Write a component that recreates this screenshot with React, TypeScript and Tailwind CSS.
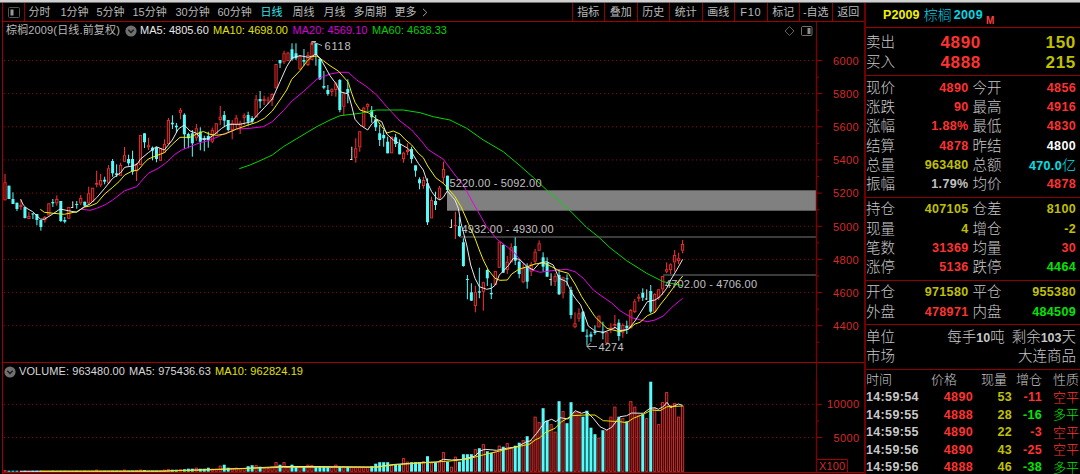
import React from "react";

type Kind = "r" | "c" | "w";
// kind, high, body top, body bottom, low
type Candle = [Kind, number, number, number, number];

const STEP = 3.986;
const FIRST_X = 5;
const BASELINE = 471.7;

const candles: Candle[] = [
  ["r", 174, 182.3, 200.3, 200.3], ["c", 185.7, 185.7, 199, 199], ["c", 192.3, 199, 204, 204], ["c", 202.7, 202.7, 209, 211],
  ["r", 199.3, 205, 207, 210], ["c", 207, 207, 218, 218.5], ["r", 212, 216, 219, 219], ["c", 213, 213.5, 214.5, 219],
  ["c", 214, 214, 220, 225.3], ["c", 220, 220, 227, 230.7], ["r", 216, 217, 220, 222.7], ["r", 203, 203.3, 215.3, 215.3],
  ["c", 199, 202, 203.3, 207], ["r", 195.3, 199, 203.3, 205.7], ["c", 201, 201, 221, 222], ["c", 217, 220, 221.7, 223.3],
  ["r", 207, 207, 218.7, 218.7], ["w", 201.3, 206.5, 207.5, 207.7], ["c", 201, 204, 205, 208.7], ["r", 195, 198, 203.3, 205],
  ["c", 201.7, 201.7, 205.7, 206], ["r", 186.7, 193.3, 203.3, 205], ["r", 187.7, 187.7, 201.7, 202], ["r", 170.7, 183, 184.7, 187.3],
  ["r", 174, 180, 185.3, 187], ["c", 176.7, 179.7, 181.7, 184.3], ["r", 165, 168.3, 183.3, 183.3], ["c", 159, 161, 173.3, 176.7],
  ["c", 164.3, 173.3, 175, 177], ["r", 162.7, 165, 175.7, 175.7], ["r", 147, 155.3, 161.7, 162], ["c", 154.7, 159, 163.3, 165.7],
  ["c", 150.7, 159, 171.7, 174.7], ["r", 163, 164.7, 171.3, 181], ["r", 135, 135, 165, 165], ["c", 133.3, 133.3, 142.3, 148],
  ["r", 137.7, 145.3, 147.3, 150], ["c", 146.5, 147.7, 150.7, 160.3], ["c", 147, 147.3, 159, 162.3], ["r", 148, 148.3, 160.7, 160.7],
  ["r", 139.3, 144, 152.7, 152.7], ["r", 118, 120, 144, 144], ["c", 115.3, 122.7, 124.3, 129], ["c", 123, 125.7, 127.3, 132.7],
  ["r", 108, 110, 112.7, 119.3], ["c", 113.3, 114.7, 134.3, 148.7], ["c", 132.7, 134, 138.3, 148.3], ["c", 130, 133.3, 143.3, 156.7],
  ["r", 124, 128.3, 138.3, 141], ["c", 127.3, 131.7, 141.7, 150.3], ["c", 135.7, 138.3, 140, 151.3], ["c", 131.7, 136, 140, 147.7],
  ["r", 127.7, 130, 141.7, 143.3], ["r", 123, 123.3, 134, 134], ["r", 106, 116.7, 120, 125], ["c", 111, 115, 120.7, 126.7],
  ["c", 120, 120, 130, 131.7], ["r", 120, 123.3, 130, 139.3], ["r", 115, 117.7, 125, 129], ["r", 120.7, 122.7, 126.7, 134],
  ["r", 113.3, 115.3, 118, 125.3], ["c", 111.7, 115, 121.7, 125.7], ["c", 116, 118, 121.7, 123.3], ["r", 95, 99.3, 117.3, 117.3],
  ["c", 91, 99, 101.3, 108.3], ["r", 95.7, 99, 101, 105], ["r", 96.7, 99.5, 100.5, 104], ["r", 93.3, 94, 100, 106],
  ["r", 64, 64, 88.3, 88.3], ["c", 60, 60, 63.3, 68], ["r", 50.7, 53.3, 62.3, 64], ["r", 51.7, 52.7, 61, 61],
  ["c", 43.3, 49.3, 59.3, 60.7], ["c", 43.3, 53.3, 58.3, 60], ["r", 55, 56, 69.3, 70], ["c", 49, 60, 61.7, 65.7],
  ["r", 51.7, 55, 65, 66], ["r", 41, 42.7, 60, 60], ["c", 43, 43.3, 55, 65.7], ["c", 58, 59, 79.3, 80],
  ["c", 71, 86, 87.7, 89.3], ["c", 85, 90, 94, 95.7], ["r", 88.3, 89.3, 92, 96], ["r", 81.7, 83.3, 90, 96.7],
  ["c", 79, 80, 110, 112.3], ["r", 93.3, 93.3, 106.7, 115.7], ["c", 79.3, 89, 93, 103.3], ["w", 146.7, 158.5, 159.5, 160],
  ["r", 138.3, 148.3, 157.7, 162.7], ["r", 131.3, 131.3, 147.3, 151.7], ["r", 106.7, 107.7, 126.7, 126.7], ["r", 103.3, 104, 106.7, 111.7],
  ["c", 106, 110, 117.3, 122.7], ["c", 115, 119.3, 127.3, 131], ["c", 125, 133.3, 140, 146], ["c", 130, 135, 138.3, 146.7],
  ["c", 136.7, 141.7, 153.3, 153.3], ["r", 136.7, 136.7, 153.3, 153.3], ["c", 134, 137.3, 144, 147], ["c", 139.3, 144, 154.3, 154.3],
  ["r", 151.7, 152.7, 159, 162.7], ["r", 143.3, 150, 152, 155], ["c", 146.7, 149, 159, 163.3], ["c", 165.3, 165.3, 170.7, 176.7],
  ["c", 177.3, 179.3, 183.3, 189.3], ["r", 176.7, 180, 186, 188.7], ["c", 178.3, 183.3, 222.3, 225], ["r", 196.7, 200, 218.3, 218.3],
  ["c", 191.7, 201, 205, 210], ["r", 186, 187.7, 198.3, 200], ["r", 161.7, 169, 177.7, 184], ["c", 175.7, 175.7, 190, 191],
  ["w", 219.3, 226.5, 227.5, 227.7], ["r", 211.7, 225, 226, 239], ["c", 216.7, 226, 236, 237], ["c", 238.3, 242.3, 266, 266.7],
  ["c", 275, 279, 280, 299.3], ["c", 283.3, 292.3, 300.7, 301], ["r", 285.7, 292.3, 306, 312.3], ["c", 267.7, 291.3, 292.7, 298.3],
  ["r", 281.7, 282.3, 291.7, 310.7], ["c", 269, 270, 278.3, 286], ["c", 283.3, 293, 294.3, 299], ["r", 271, 271, 285, 285],
  ["r", 241.7, 241.7, 267.7, 268], ["c", 244, 245, 272.7, 273], ["r", 256, 261.7, 270, 274], ["r", 243.3, 247.3, 262.3, 262.3],
  ["c", 237.3, 246, 260.7, 265], ["c", 260, 261.7, 274, 278.3], ["r", 263.3, 268.3, 282.3, 283.3], ["c", 263.3, 266, 281.7, 288.7],
  ["r", 261.7, 264.3, 271.7, 276], ["r", 249, 251.7, 261.7, 264.3], ["r", 240.3, 243.3, 250.7, 250.7], ["c", 252.3, 257.3, 266.7, 271.7],
  ["c", 257.3, 262.7, 276.7, 277], ["w", 273.3, 278.5, 279.5, 285.7], ["r", 273.3, 276, 281.7, 286], ["c", 269, 275, 294.3, 295],
  ["r", 276.7, 277.3, 293.3, 298.3], ["c", 274.3, 278.3, 279.3, 285.7], ["c", 286.7, 290, 315, 318.7], ["r", 312.3, 323.3, 327.3, 328.3],
  ["r", 308.3, 313.3, 318.7, 321.7], ["c", 311, 311.7, 331.7, 332], ["c", 329.3, 335.5, 336.7, 345.7], ["c", 331.7, 334.3, 336.7, 341.7],
  ["c", 325.3, 331.5, 333, 335], ["r", 315.7, 315.7, 327.3, 327.3], ["c", 321.7, 331.7, 333.3, 339.3], ["r", 331.7, 332.3, 343.3, 343.3],
  ["r", 323.3, 327.5, 329, 333.3], ["r", 315, 324, 325.7, 329.3], ["c", 319.3, 322.7, 336, 340.7], ["r", 323.3, 325, 332.7, 337.7],
  ["c", 320.7, 325.7, 328.3, 334], ["r", 309, 310, 328.3, 328.3], ["r", 299, 301.3, 312, 313], ["r", 294, 296.7, 298.7, 301.7],
  ["c", 288.3, 292.7, 297.7, 301], ["w", 289.3, 298, 299, 300], ["c", 285, 291, 311.7, 313.3], ["r", 293.3, 294, 311.7, 312.5],
  ["r", 289.3, 289.3, 297.7, 300], ["r", 276, 276, 289.3, 295], ["r", 262.3, 269.3, 271.7, 273.3], ["r", 263.3, 264.3, 270, 274],
  ["r", 250, 255, 262.3, 271.7], ["r", 252.7, 258.3, 261, 264], ["r", 240, 244, 250.7, 253.3],
];

// bar heights in pixels, one for each candle
const volumes: number[] = [
  1.5, 1, 1, 1, 1, 1, 1, 1, 1, 1, 1, 1, 1, 1, 1, 1, 1, 1, 1, 1,
  1, 1, 1, 2, 1, 1, 1, 1, 1, 1, 2, 1, 1, 1.5, 2, 1.5, 1, 1, 1, 1,
  2, 2.5, 2, 2, 2.5, 2.5, 3, 3, 4, 3, 3, 4, 3, 3, 6, 7, 4, 3.5, 4, 3.5,
  3.5, 5.5, 6.5, 6.5, 5, 4, 3.5, 5, 9.5, 7, 9.5, 5, 7, 5.5, 5, 5.5, 7, 6.5, 5, 5.5,
  5.5, 5, 5, 7, 5, 5.5, 5, 5, 5, 5, 5, 5, 5.5, 8, 9.5, 9.5, 9.5, 7, 7.5, 7,
  13.5, 10, 9.5, 9.5, 9.5, 10.5, 15.5, 9, 9, 10, 19.5, 10, 5, 15, 10, 17.5, 17.5, 17.5, 22.5, 23.5,
  27.5, 20.5, 19, 20, 26, 25, 28.5, 24.5, 26, 29, 31.5, 35.5, 31.5, 55, 49.5, 63.5, 51, 47.5, 40, 70.5,
  60.5, 48.5, 69.5, 59.5, 60, 55, 61, 44, 37.5, 34, 41.5, 41.5, 55, 65, 55, 53.5, 50.5, 70.5, 65, 57,
  57.5, 53.5, 90, 63.5, 47.5, 69.5, 79.5, 66.5, 68.5, 55, 66,
];

const priceLines = [
  {
    color: "#e800e8",
    points:
      "81.7,209.3 90,210.3 96.7,208.3 104.7,205 112.7,200 120,194.3 124.7,190.7 136.7,186.7 140.3,182.3 148.3,173.3 158.3,168.3 166.7,162.3 175,154.3 181.7,150 190,146.7 200,142.7 208.3,140.7 218.3,136.7 225,133.3 236.7,129 250,128.3 263.3,126.7 272.3,121.7 283.3,110.7 292.3,100.7 303.3,91.7 316.7,79.3 330,74 340,72.3 348.3,72.3 356.7,80 366.7,86.7 376.7,95 386.7,106.7 400,121 411.7,130 423.3,143.3 427.7,149.3 443.3,159.3 455,175 463.3,185 473.3,203.3 486.7,226.7 496.7,239 507.3,247 515,253.3 521.7,261.7 530,269.3 540,272.3 551.7,270.7 566.7,269.3 575,271.7 583.3,278.3 593.3,290 603,297 611.7,303 620,310.7 631.7,317.7 647.3,321.7 655,320 663.3,316 673.3,306 682.7,298.3",
  },
  {
    color: "#00d800",
    points:
      "239.3,168.7 250,165 260,160.7 272.3,155 283.3,146.7 300,136.7 316.7,126.7 330,120 340,115.7 360,113.3 376.7,110 403.3,110 420,112.7 433.3,116.7 450,120 466.7,128.3 483.3,140 503.3,151.7 520,165.7 533.3,177.5 546.7,190 570,210.7 586.7,227.5 598.3,236.7 610,247.7 626.7,260.7 646.7,273.3 663.3,281.7 682.7,285.7",
  },
  {
    color: "#f0f000",
    points:
      "40.3,209.3 44.3,212.3 53.3,213.3 64.3,214.3 76.7,211.7 84.7,207 90,206 96.7,203.3 104.7,194 112.7,187.3 119,181.7 124.7,175 132.3,171 138.3,170 143.3,164 148.3,159 156.3,155.7 164.3,152.7 172.3,144.3 180,137.3 190,137.3 196.7,134 203.3,131.5 210,134.3 216.7,135.3 225,134 236.7,129 248.3,125 256.7,122.3 264.3,118.3 272.3,111 280,100 286.7,90 291.7,79.3 300,70.7 306.7,61.7 311.7,56.7 316.7,56 323.3,60.7 330,65.7 338.3,71 348.3,82.3 351.7,93.3 355,102.3 360,110 368.3,112.7 376.7,119.3 381.7,126.7 387,133 393.3,131 400,134 405,139.3 411.7,145 418.3,153.3 423.3,157.7 427.7,166 435.7,177.7 443.3,183.3 447.3,187.7 455,196.7 461,206.7 468.3,223.3 475,238.3 479.3,250 483.3,260 488.3,270 495,278.3 500,280.3 507.3,280 511.7,274 519.3,269 527.3,266.7 535,264 543,262.7 551.7,266.7 559,270.7 568.3,273.3 575,284 581.7,296.7 588.3,306.7 595,316.7 601.7,323.3 607,328.3 610,329.3 620,331.7 628.3,329.3 635,324 640,322.3 647.3,315.7 655,312.3 660,305 666.7,296.7 673.3,287.7 682.7,276",
  },
  {
    color: "#e8e8e8",
    points:
      "20.7,199.3 23.3,205 26.7,208.3 32.7,211.7 40.3,219 44.3,219.3 52.3,214.3 60,209 68.3,210.7 76.7,212.3 83.3,207.3 90,204 96.7,197.7 104.7,188.3 112.7,178.3 120.7,172.7 124.7,167.3 132.3,166 137.3,164 140.3,159.3 148.3,152.7 156.3,146.7 164.3,150 172.3,140 178.3,129 184.3,125 190,131 196.7,133.3 201,139 208.3,138.8 215,134 221.7,128.3 228.3,124.3 240,124.3 251.7,121.7 256.7,115.7 264.3,107.7 272.3,99 280,81.7 286.7,66.7 292.3,57.7 300,55.7 308.3,57.3 312.3,56 316,54 320.7,59 325,66.7 330,75.7 335.7,83.3 340,91.7 348.3,94 351.7,106 355,119.3 360,125 367.7,130 371.7,124 376.7,119.3 381.7,121.7 386.7,134 393.3,140 400,143.8 407.7,148.3 411.7,152.3 418.3,163.3 423.3,170 427.7,183.3 431.7,191.7 436.7,198.3 440,200 443.3,197.3 447.3,191 455,200 458.3,208.3 461,223.3 466.7,245 470.7,265 475,278.3 479.3,286.7 486.7,289.3 491.3,288.3 495.3,285 499.3,275 503.3,271 508.3,265.7 513.3,258.3 519.3,259.3 527.3,266.7 533.3,270 539.3,263.3 546.7,261.7 553.3,265 559,278.3 566.7,281.7 571,291.7 575.3,298.3 580.7,305 585,316.7 588.3,326 595,331 603.3,332.3 611.7,329.3 615,327.3 620,330.7 628.3,329.3 635,321 640,313.3 647.3,301.7 655,300 660,296.7 666.7,288.3 670.7,280 676.7,270 682.7,259.3",
  },
];

const volumeLines = [
  {
    color: "#e8e8e8",
    points:
      "20,471.3 165,471 195,470 240,468.7 262,467.5 283,466.5 310,466.5 376,467 393,464.5 410,463.3 430,462.3 436.7,462.3 443.3,459.3 451.7,460 463.3,459.3 475,456 480,451 485,449.3 496.7,450.3 506.7,448.3 517.3,446.7 526.7,441.7 530,441 536.7,433.3 545,421.7 551.7,419.3 556,421.7 560,417.7 568.3,419 575,410.7 581.7,413.3 586.7,411.7 593.3,418.3 600,426.7 606.7,430 611.7,427.3 620,416.7 626.7,415.7 631.7,413 643.3,413.3 650,408.3 655,407.7 658.3,409.3 663.3,406.7 667,402.3 670.7,407.7 678.3,404 682.7,405.3",
  },
  {
    color: "#e6e600",
    points:
      "40,471.3 163.3,471.3 173.3,470.7 193.3,470.3 213.3,469.7 233.3,468.7 260,468 283.3,467.3 376.7,467.3 393.3,465 430,462.3 450,461 466.7,459.3 480,455.7 496.7,451.7 513.3,447.7 530,444 535,440 540,437.7 545,432.7 555,428.3 561.7,421.7 571.7,415.7 585,415 595,415 603.3,420.7 620,421.7 626.7,422.7 633.3,418.3 643.3,414.3 651.7,410 660,410.7 667,406.7 682.7,406",
  },
];

const priceTicks = [6000, 5800, 5600, 5400, 5200, 5000, 4800, 4600, 4400].map((value, i) => ({
  value,
  y: 60.5 + i * 33.15,
}));

const periods = [
  { label: "分时", width: "w-8" },
  { label: "1分钟", width: "w-9" },
  { label: "5分钟", width: "w-9" },
  { label: "15分钟", width: "w-[43px]" },
  { label: "30分钟", width: "w-[42px]" },
  { label: "60分钟", width: "w-[43px]" },
  { label: "日线", width: "w-8", active: true },
  { label: "周线", width: "w-[31px]" },
  { label: "月线", width: "w-[30px]" },
  { label: "多周期", width: "w-[41px]" },
  { label: "更多", width: "w-[26px]" },
];

const tools = ["指标", "叠加", "历史", "统计", "画线", "F10", "标记", "-自选", "返回"];

const RED = "text-[#ff3232]";
const YELLOW = "text-[#c0c000]";
const GREEN = "text-[#00e600]";
const CYAN = "text-[#00e0e8]";
const WHITE = "text-white";
const GRAY = "text-[#c0c0c0]";

type QuoteLine = [string, string, string, string, string, string];

const quotes: QuoteLine[] = [
  ["现价", "4890", RED, "今开", "4856", RED],
  ["涨跌", "90", RED, "最高", "4916", RED],
  ["涨幅", "1.88%", RED, "最低", "4830", RED],
  ["结算", "4878", RED, "昨结", "4800", WHITE],
  ["总量", "963480", YELLOW, "总额", "470.0亿", CYAN],
  ["振幅", "1.79%", GRAY, "均价", "4878", RED],
];

const positions: QuoteLine[] = [
  ["持仓", "407105", YELLOW, "仓差", "8100", YELLOW],
  ["现量", "4", YELLOW, "增仓", "-2", YELLOW],
  ["笔数", "31369", RED, "均量", "30", RED],
  ["涨停", "5136", RED, "跌停", "4464", GREEN],
];

const flows: QuoteLine[] = [
  ["开仓", "971580", YELLOW, "平仓", "955380", YELLOW],
  ["外盘", "478971", RED, "内盘", "484509", GREEN],
];

const trades = [
  { time: "14:59:54", price: "4890", volume: "53", change: "-11", nature: "空平", tone: RED },
  { time: "14:59:55", price: "4888", volume: "28", change: "-16", nature: "多平", tone: GREEN },
  { time: "14:59:55", price: "4890", volume: "22", change: "-3", nature: "空平", tone: RED },
  { time: "14:59:56", price: "4890", volume: "43", change: "-25", nature: "空平", tone: RED },
  { time: "14:59:56", price: "4888", volume: "46", change: "-38", nature: "多平", tone: GREEN },
];

const svgFont = "'Liberation Sans', 'Noto Sans CJK SC', sans-serif";

function CandleMark({ candle, index }: { candle: Candle; index: number }) {
  const [kind, high, top, bottom, low] = candle;
  const x = FIRST_X + index * STEP;
  if (kind === "w") {
    return <path d={`M${x} ${high}V${low}M${x - 1.8} ${bottom}H${x + 0.4}`} stroke="#e0e0e0" strokeWidth="1" fill="none" />;
  }
  if (kind === "c") {
    return (
      <g fill="#54fcfc">
        <rect x={x - 0.5} y={high} width="1" height={low - high} />
        <rect x={x - 1.5} y={top} width="3" height={bottom - top} />
      </g>
    );
  }
  return (
    <g fill="#ff3232">
      <rect x={x - 0.5} y={high} width="1" height={Math.max(top - high, 0)} />
      <rect x={x - 0.5} y={bottom} width="1" height={Math.max(low - bottom, 0)} />
      <rect
        x={x - 1.1}
        y={top + 0.4}
        width="2.2"
        height={Math.max(bottom - top - 0.8, 0.3)}
        fill="#300404"
        stroke="#f03030"
        strokeWidth="0.9"
      />
    </g>
  );
}

function VolumeBar({ height, index }: { height: number; index: number }) {
  const x = FIRST_X + index * STEP;
  if (candles[index][0] === "c") {
    return <rect x={x - 1.5} y={BASELINE - height} width="3" height={height} fill="#54fcfc" />;
  }
  return (
    <rect
      x={x - 1.1}
      y={BASELINE - height + 0.4}
      width="2.2"
      height={Math.max(height - 0.8, 0.3)}
      fill="#380606"
      stroke="#e03030"
      strokeWidth="0.9"
    />
  );
}

function GridLine({ y }: { y: number }) {
  return (
    <>
      <line x1="4" x2="815" y1={y} y2={y} stroke="#a00000" strokeWidth="1" strokeDasharray="1 3" />
      <line x1="817" x2="822" y1={y} y2={y} stroke="#a00000" strokeWidth="1" />
    </>
  );
}

function PriceChart() {
  return (
    <svg className="block shrink-0" width="864" height="323" viewBox="0 39 864 323" fontFamily={svgFont}>
      {priceTicks.map((tick) => (
        <g key={tick.value}>
          <GridLine y={tick.y} />
          <line x1="817" x2="819" y1={tick.y + 16.6} y2={tick.y + 16.6} stroke="#a00000" />
          <text x="833" y={tick.y + 4.3} fontSize="11" fill="#d42a2a" textLength="25.5">
            {tick.value}
          </text>
        </g>
      ))}
      <rect x="447" y="190.3" width="369" height="20.4" fill="#808080" />
      <line x1="460" x2="816" y1="237" y2="237" stroke="#505050" strokeWidth="1.6" />
      <line x1="663" x2="816" y1="275" y2="275" stroke="#505050" strokeWidth="1.6" />
      {candles.map((candle, i) => (
        <CandleMark key={i} candle={candle} index={i} />
      ))}
      {priceLines.map((line) => (
        <polyline key={line.color} points={line.points} fill="none" stroke={line.color} strokeWidth="1" />
      ))}
      <g fill="#c0c0c0" fontSize="11">
        <text x="449.5" y="186.8" textLength="92">5220.00 - 5092.00</text>
        <text x="461.5" y="233" textLength="92">4932.00 - 4930.00</text>
        <text x="665" y="288.3" textLength="92">4702.00 - 4706.00</text>
        <text x="324.5" y="50" textLength="26">6118</text>
        <text x="598.5" y="351" textLength="25">4274</text>
      </g>
      <g fill="none" stroke="#b0b0b0" strokeWidth="1">
        <path d="M312 45V41.5H316M313 42L322 45.5" />
        <path d="M587 346.5H597M590.5 343L587 346.5L590.5 350" />
      </g>
      <line x1="816.5" x2="816.5" y1="39" y2="362" stroke="#800000" strokeWidth="1.4" />
    </svg>
  );
}

function VolumeChart() {
  return (
    <svg className="block shrink-0" width="864" height="94" viewBox="0 380 864 94" fontFamily={svgFont}>
      <GridLine y={404.4} />
      <GridLine y={437.5} />
      <line x1="817" x2="819" y1="421" y2="421" stroke="#a00000" />
      {volumes.map((height, i) => (
        <VolumeBar key={i} height={height} index={i} />
      ))}
      {volumeLines.map((line) => (
        <polyline key={line.color} points={line.points} fill="none" stroke={line.color} strokeWidth="1" />
      ))}
      <g fill="#d42a2a" fontSize="11">
        <text x="827" y="408.3" textLength="32">10000</text>
        <text x="833.5" y="441.5" textLength="25.5">5000</text>
        <text x="819" y="470.3" fontSize="11" textLength="26">X100</text>
      </g>
      <path d="M817 459.5H847.5V472" fill="none" stroke="#a00000" />
      <line x1="816.5" x2="816.5" y1="380" y2="472" stroke="#800000" strokeWidth="1.4" />
      <line x1="2" x2="864" y1="472.7" y2="472.7" stroke="#a00000" strokeWidth="1.2" />
    </svg>
  );
}

function RoundToggle() {
  return (
    <svg className="shrink-0" width="12" height="12" viewBox="0 0 12 12">
      <circle cx="6" cy="6" r="5.6" fill="#707070" />
      <path d="M3.3 4.8L6 7.5L8.7 4.8" fill="none" stroke="#181818" strokeWidth="1.4" />
    </svg>
  );
}

function Toolbar() {
  return (
    <div className="flex h-[19px] shrink-0 items-center border-b border-[#a00000] text-[11px] text-[#b8b8b8]">
      <div className="flex h-full w-[22px] items-center justify-center border-r border-[#900000]">
        <svg width="12" height="11" viewBox="0 0 12 11">
          <rect x="0.5" y="0.5" width="11" height="10" rx="1" fill="none" stroke="#555" />
          <rect x="2.5" y="2.5" width="3" height="6" fill="#999" />
        </svg>
      </div>
      <div className="flex flex-1 pt-px pl-[3.5px] whitespace-nowrap">
        {periods.map((period) => (
          <span key={period.label} className={`${period.width} ${period.active ? "text-[#38e0e8]" : ""}`}>
            {period.label}
          </span>
        ))}
        <svg className="mt-1" width="8" height="9" viewBox="0 0 8 9">
          <path d="M2 0.8L5.8 4.5L2 8.2" fill="none" stroke="#a0a0a0" />
        </svg>
      </div>
      {tools.map((tool) => (
        <div key={tool} className="flex h-full w-[32.5px] items-center justify-center whitespace-nowrap border-l border-[#900000] pt-px">
          <span className={tool === "F10" ? "tracking-[0.6px]" : ""}>{tool}</span>
        </div>
      ))}
    </div>
  );
}

function QuoteRows({ lines }: { lines: QuoteLine[] }) {
  return (
    <>
      {lines.map(([label, value, tone, label2, value2, tone2]) => (
        <div key={label} className="flex h-[19.35px] items-center text-[12.5px] font-bold leading-none tracking-[0.35px]">
          <span className="w-[30px] text-[14.5px] font-light tracking-normal text-[#c8c8c8]">{label}</span>
          <span className={`w-[72.5px] text-right ${tone}`}>{value}</span>
          <span className="ml-1 w-[30px] text-[14.5px] font-light tracking-normal text-[#c8c8c8]">{label2}</span>
          <span className={`flex-1 text-right ${tone2}`}>
            {value2.replace("亿", "")}
            {value2.endsWith("亿") && <span className="text-[14px] font-light tracking-normal">亿</span>}
          </span>
        </div>
      ))}
    </>
  );
}

function QuotePanel() {
  return (
    <aside className="flex w-[216px] shrink-0 flex-col border-l-2 border-[#700000] whitespace-nowrap">
      <div className="flex h-[25px] shrink-0 items-center border-b border-[#a00000] pl-[17px] text-[12.5px] font-bold">
        <span className="tracking-[0.1px] text-[#f0f000]">P2009</span>
        <span className="ml-1 text-[14px] font-light text-[#00d0e0]">棕榈</span>
        <span className="ml-0.5 tracking-[0.4px] text-[#00d8e8]">2009</span>
        <span className="ml-[3px] mt-2.5 text-[10px] text-[#ff4040]">M</span>
      </div>
      <div className="flex h-[48.3px] shrink-0 flex-col justify-center border-b border-[#900000] pt-[1.5px] pr-1">
        {[
          ["卖出", "4890", "150"],
          ["买入", "4888", "215"],
        ].map(([label, price, lots]) => (
          <div key={label} className="flex h-[19.5px] items-center text-[17px] font-bold leading-none tracking-[0.7px]">
            <span className="w-[30px] text-[14.5px] font-light tracking-normal text-[#c8c8c8]">{label}</span>
            <span className="w-[85px] text-right text-[#ff3232]">{price}</span>
            <span className="flex-1 text-right text-[#c0c000]">{lots}</span>
          </div>
        ))}
      </div>
      <div className="h-[121.7px] shrink-0 border-b border-[#900000] pt-[2px] pr-1">
        <QuoteRows lines={quotes} />
      </div>
      <div className="h-[83px] shrink-0 border-b border-[#900000] pt-[2px] pr-1">
        <QuoteRows lines={positions} />
      </div>
      <div className="h-[44.2px] shrink-0 border-b border-[#900000] pt-[2px] pr-1">
        <QuoteRows lines={flows} />
      </div>
      <div className="h-[44.6px] shrink-0 border-b border-[#900000] pt-[2.3px] pr-1 text-[14.5px] font-light text-[#c8c8c8]">
        <div className="flex h-[19.35px] items-center leading-none">
          <span className="flex-1">单位</span>
          <span>
            每手<span className="text-[12.5px] font-bold">10</span>吨
          </span>
          <span className="ml-[7px]">
            剩余<span className="text-[12.5px] font-bold">103</span>天
          </span>
        </div>
        <div className="flex h-[19.35px] items-center justify-between leading-none">
          <span>市场</span>
          <span>大连商品</span>
        </div>
      </div>
      <div className="flex h-[18.8px] shrink-0 items-center pt-px text-[13px] font-light leading-none text-[#c8c8c8]">
        <span className="w-[65px]">时间</span>
        <span className="w-[50px]">价格</span>
        <span className="w-[35px]">现量</span>
        <span className="w-[37px]">增仓</span>
        <span>性质</span>
      </div>
      {trades.map((trade, i) => (
        <div key={i} className="flex h-[17.55px] shrink-0 items-center text-[12.5px] font-bold leading-none tracking-[0.35px]">
          <span className="w-[52px] text-[#c8c8c8]">{trade.time}</span>
          <span className="w-[55px] text-right text-[#ff3232]">{trade.price}</span>
          <span className="w-[39px] text-right text-[#c0c000]">{trade.volume}</span>
          <span className={`w-[30px] text-right ${trade.tone}`}>{trade.change}</span>
          <span className={`ml-[11px] text-[13px] font-light tracking-normal ${trade.tone}`}>{trade.nature}</span>
        </div>
      ))}
    </aside>
  );
}

export default function App() {
  return (
    <div className="flex h-[474px] w-[1080px] flex-col overflow-hidden bg-black font-['Liberation_Sans','Noto_Sans_CJK_SC',sans-serif]">
      <div className="h-[3px] shrink-0 border-b border-[#707070] bg-[#d0d0d0]" />
      <div className="flex min-h-0 flex-1">
        <main className="flex w-[864px] shrink-0 flex-col">
          <div className="ml-[2px] flex flex-1 flex-col border-l border-[#a00000]">
            <Toolbar />
            <div className="flex h-[17px] shrink-0 items-center whitespace-nowrap text-[11px] leading-none">
              <span className="w-[122px] pl-[3px] tracking-[0.15px] text-[#b8b8b8]">棕榈2009(日线.前复权)</span>
              <RoundToggle />
              <span className="ml-[3px] w-[73px] tracking-[0.03px] text-[#e8e8e8]">MA5: 4805.60</span>
              <span className="w-[79.5px] tracking-[0.03px] text-[#e0e000]">MA10: 4698.00</span>
              <span className="w-[79.5px] tracking-[0.03px] text-[#d800d8]">MA20: 4569.10</span>
              <span className="flex-1 tracking-[0.03px] text-[#00d000]">MA60: 4638.33</span>
              <svg className="mr-[3px]" width="29" height="12" viewBox="0 0 29 12">
                <path d="M5.5 1.5L10 6L5.5 10.5L1 6Z" fill="none" stroke="#606060" />
                <rect x="17.5" y="1.5" width="10.5" height="9" rx="1" fill="none" stroke="#707070" />
                <rect x="23.5" y="3" width="3" height="6" fill="#909090" />
              </svg>
              <div className="h-full w-12 border-l border-[#800000]" />
            </div>
            <div className="-ml-[3px]">
              <PriceChart />
            </div>
            <div className="flex h-[18px] shrink-0 items-center whitespace-nowrap border-t border-[#a00000] pl-px text-[11px] leading-none tracking-[0.08px]">
              <RoundToggle />
              <span className="ml-[3px] w-[110px] text-[#d8d8d8]">VOLUME: 963480.00</span>
              <span className="w-[86px] text-[#d8d8d8]">MA5: 975436.63</span>
              <span className="flex-1 text-[#e0e000]">MA10: 962824.19</span>
              <div className="h-full w-12 border-l border-[#800000]" />
            </div>
            <div className="-ml-[3px]">
              <VolumeChart />
            </div>
          </div>
        </main>
        <QuotePanel />
      </div>
    </div>
  );
}
